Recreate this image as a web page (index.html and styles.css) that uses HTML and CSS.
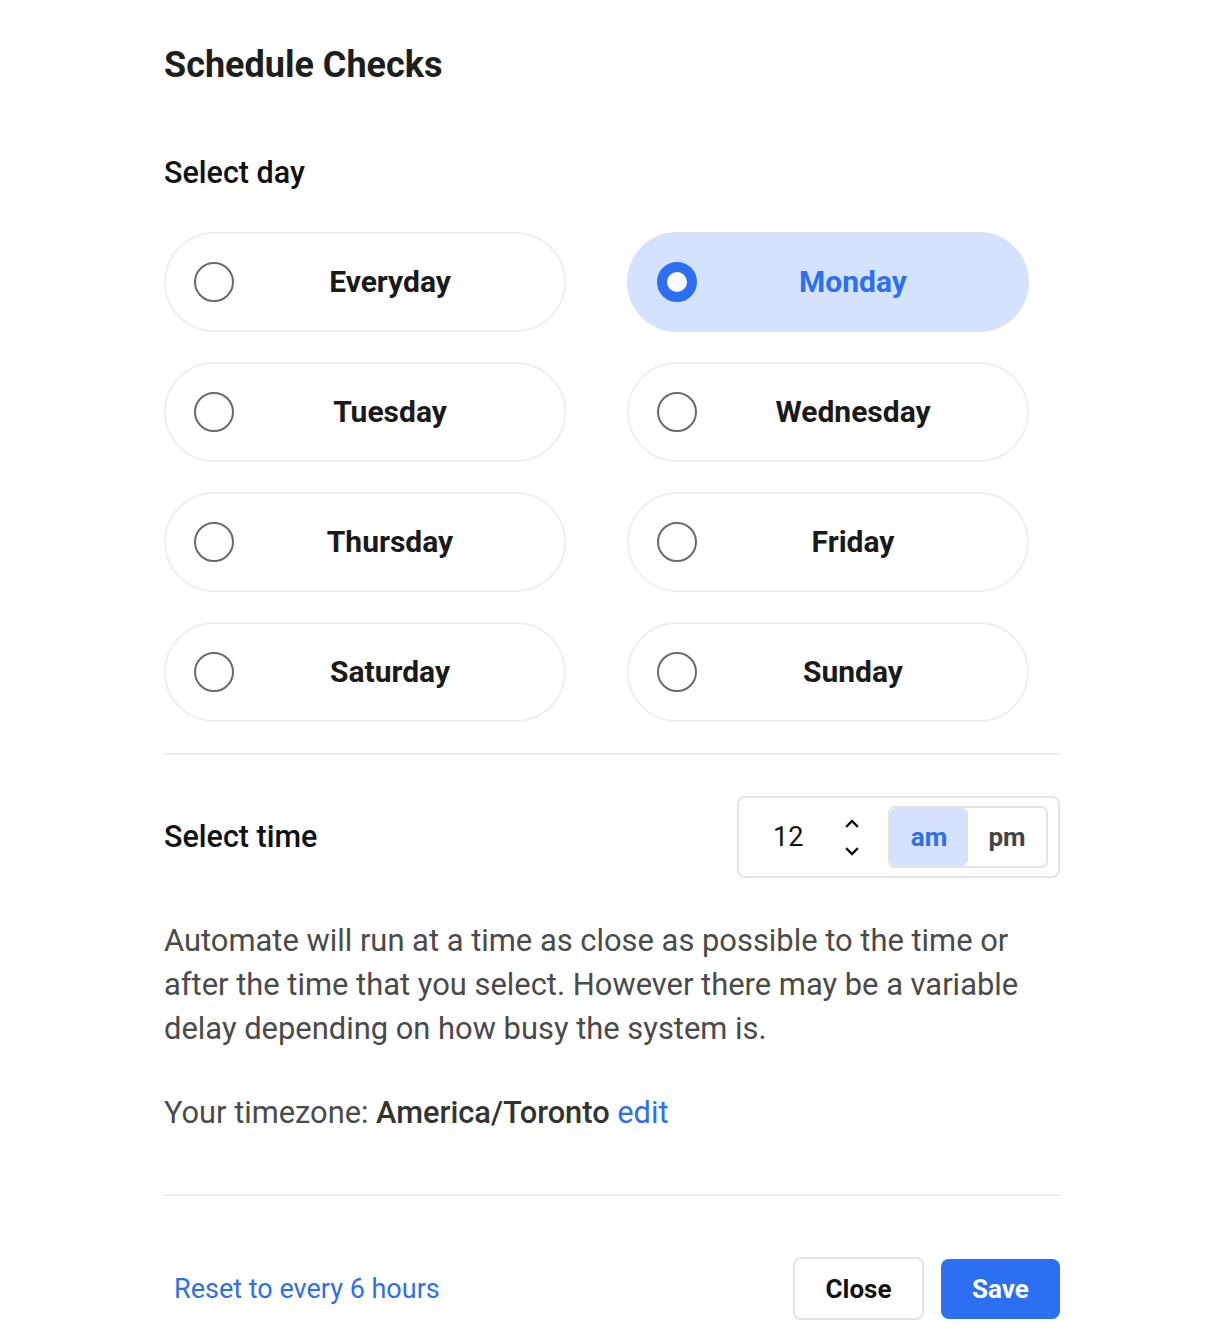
FILE: index.html
```html
<!DOCTYPE html>
<html lang="en">
<head>
<meta charset="utf-8">
<title>Schedule Checks</title>
<link rel="stylesheet" href="styles.css">
</head>
<body>
<div class="page">
  <h1 class="title">Schedule Checks</h1>
  <h2 class="section-label">Select day</h2>
  <div class="day-grid">
    <div class="day"><span class="radio"></span><span class="day-name">Everyday</span></div>
    <div class="day selected"><span class="radio"></span><span class="day-name">Monday</span></div>
    <div class="day"><span class="radio"></span><span class="day-name">Tuesday</span></div>
    <div class="day"><span class="radio"></span><span class="day-name">Wednesday</span></div>
    <div class="day"><span class="radio"></span><span class="day-name">Thursday</span></div>
    <div class="day"><span class="radio"></span><span class="day-name">Friday</span></div>
    <div class="day"><span class="radio"></span><span class="day-name">Saturday</span></div>
    <div class="day"><span class="radio"></span><span class="day-name">Sunday</span></div>
  </div>
  <div class="divider first"></div>
  <div class="time-row">
    <h2 class="section-label">Select time</h2>
    <div class="picker">
      <span class="hour">12</span>
      <span class="spin">
        <svg class="chev" width="14" height="10" viewBox="0 0 14 10"><path d="M2 8 L7 3 L12 8" fill="none" stroke="#111" stroke-width="2.4" stroke-linecap="square"/></svg>
        <svg class="chev" width="14" height="10" viewBox="0 0 14 10"><path d="M2 2 L7 7 L12 2" fill="none" stroke="#111" stroke-width="2.4" stroke-linecap="square"/></svg>
      </span>
      <span class="seg">
        <span class="seg-opt active">am</span>
        <span class="seg-opt">pm</span>
      </span>
    </div>
  </div>
  <p class="info">Automate will run at a time as close as possible to the time or after the time that you select. However there may be a variable delay depending on how busy the system is.</p>
  <p class="info tz">Your timezone: <strong>America/Toronto</strong> <a class="link" href="#">edit</a></p>
  <div class="divider second"></div>
  <div class="footer">
    <a class="link reset" href="#">Reset to every 6 hours</a>
    <div class="actions">
      <button class="btn close">Close</button>
      <button class="btn save">Save</button>
    </div>
  </div>
</div>
</body>
</html>
```
FILE: styles.css
```css
* { box-sizing: border-box; }
html, body { margin: 0; padding: 0; background: #fff; }
body { font-family: Roboto, "Noto Sans", "Liberation Sans", sans-serif; color: #1a1a1a; }

.page { width: 896px; margin-left: 164px; padding-top: 43px; }

.title { margin: 0; font-size: 36px; line-height: 44px; font-weight: 700; color: #1e1e1e; }

.section-label { margin: 0; font-size: 30.5px; line-height: 40px; font-weight: 500; color: #111; }
.page > .section-label { margin-top: 66px; }

.day-grid {
  margin-top: 39px;
  display: grid;
  grid-template-columns: 402px 402px;
  column-gap: 61px;
  row-gap: 30px;
}
.day {
  height: 100px;
  border: 2px solid #efefef;
  border-radius: 50px;
  display: flex;
  align-items: center;
  padding: 0 18px 2px 28px;
}
.radio {
  width: 40px; height: 40px;
  border-radius: 50%;
  border: 2px solid #6a6a6a;
  flex: none;
  margin-top: 2px;
}
.day-name {
  flex: 1;
  text-align: center;
  font-size: 30px;
  font-weight: 700;
  color: #1a1a1a;
}
.day.selected { background: #d5e2fd; border-color: #d5e2fd; }
.day.selected .radio { border: 10px solid #2c6ff0; background: #fff; }
.day.selected .day-name { color: #2c6ff0; }

.divider { height: 2px; background: #ececec; }
.divider.first { margin-top: 31px; }
.divider.second { margin-top: 59px; }

.time-row {
  margin-top: 41px;
  display: flex;
  align-items: center;
  justify-content: space-between;
}
.picker {
  width: 323px; height: 82px;
  border: 2px solid #e4e4e4;
  border-radius: 8px;
  display: flex;
  align-items: center;
  padding: 0 10px 0 34px;
}
.hour { font-size: 27px; color: #111; width: 30px; }
.spin { display: flex; flex-direction: column; align-items: center; gap: 19px; margin-left: 42px; }
.chev { display: block; }
.seg {
  margin-left: auto;
  height: 62px;
  border: 2px solid #e4e4e4;
  border-radius: 7px;
  display: flex;
  overflow: hidden;
}
.seg-opt {
  width: 78px;
  display: flex; align-items: center; justify-content: center;
  font-size: 26px; font-weight: 700; color: #444;
}
.seg-opt.active { background: #d5e2fd; color: #2c6ff0; border-radius: 6px; }

.info { margin: 41px 0 0; font-size: 30.9px; line-height: 44px; color: #4a4a4a; }
.info.tz { margin-top: 40px; font-size: 30.8px; }
.info strong { font-weight: 500; color: #333; }
.link { color: #2c6ff0; text-decoration: none; }

.footer {
  margin-top: 61px;
  display: flex;
  align-items: center;
  justify-content: space-between;
}
.reset { font-size: 27px; margin-left: 10px; }
.actions { display: flex; align-items: center; gap: 17px; }
.btn {
  font-family: inherit;
  font-size: 26px; font-weight: 700;
  border-radius: 8px;
  cursor: pointer;
}
.btn.close { width: 131px; height: 63px; background: #fff; border: 2px solid #e4e4e4; color: #111; }
.btn.save { width: 119px; height: 60px; background: #2c6ff0; border: none; color: #fff; }
```
